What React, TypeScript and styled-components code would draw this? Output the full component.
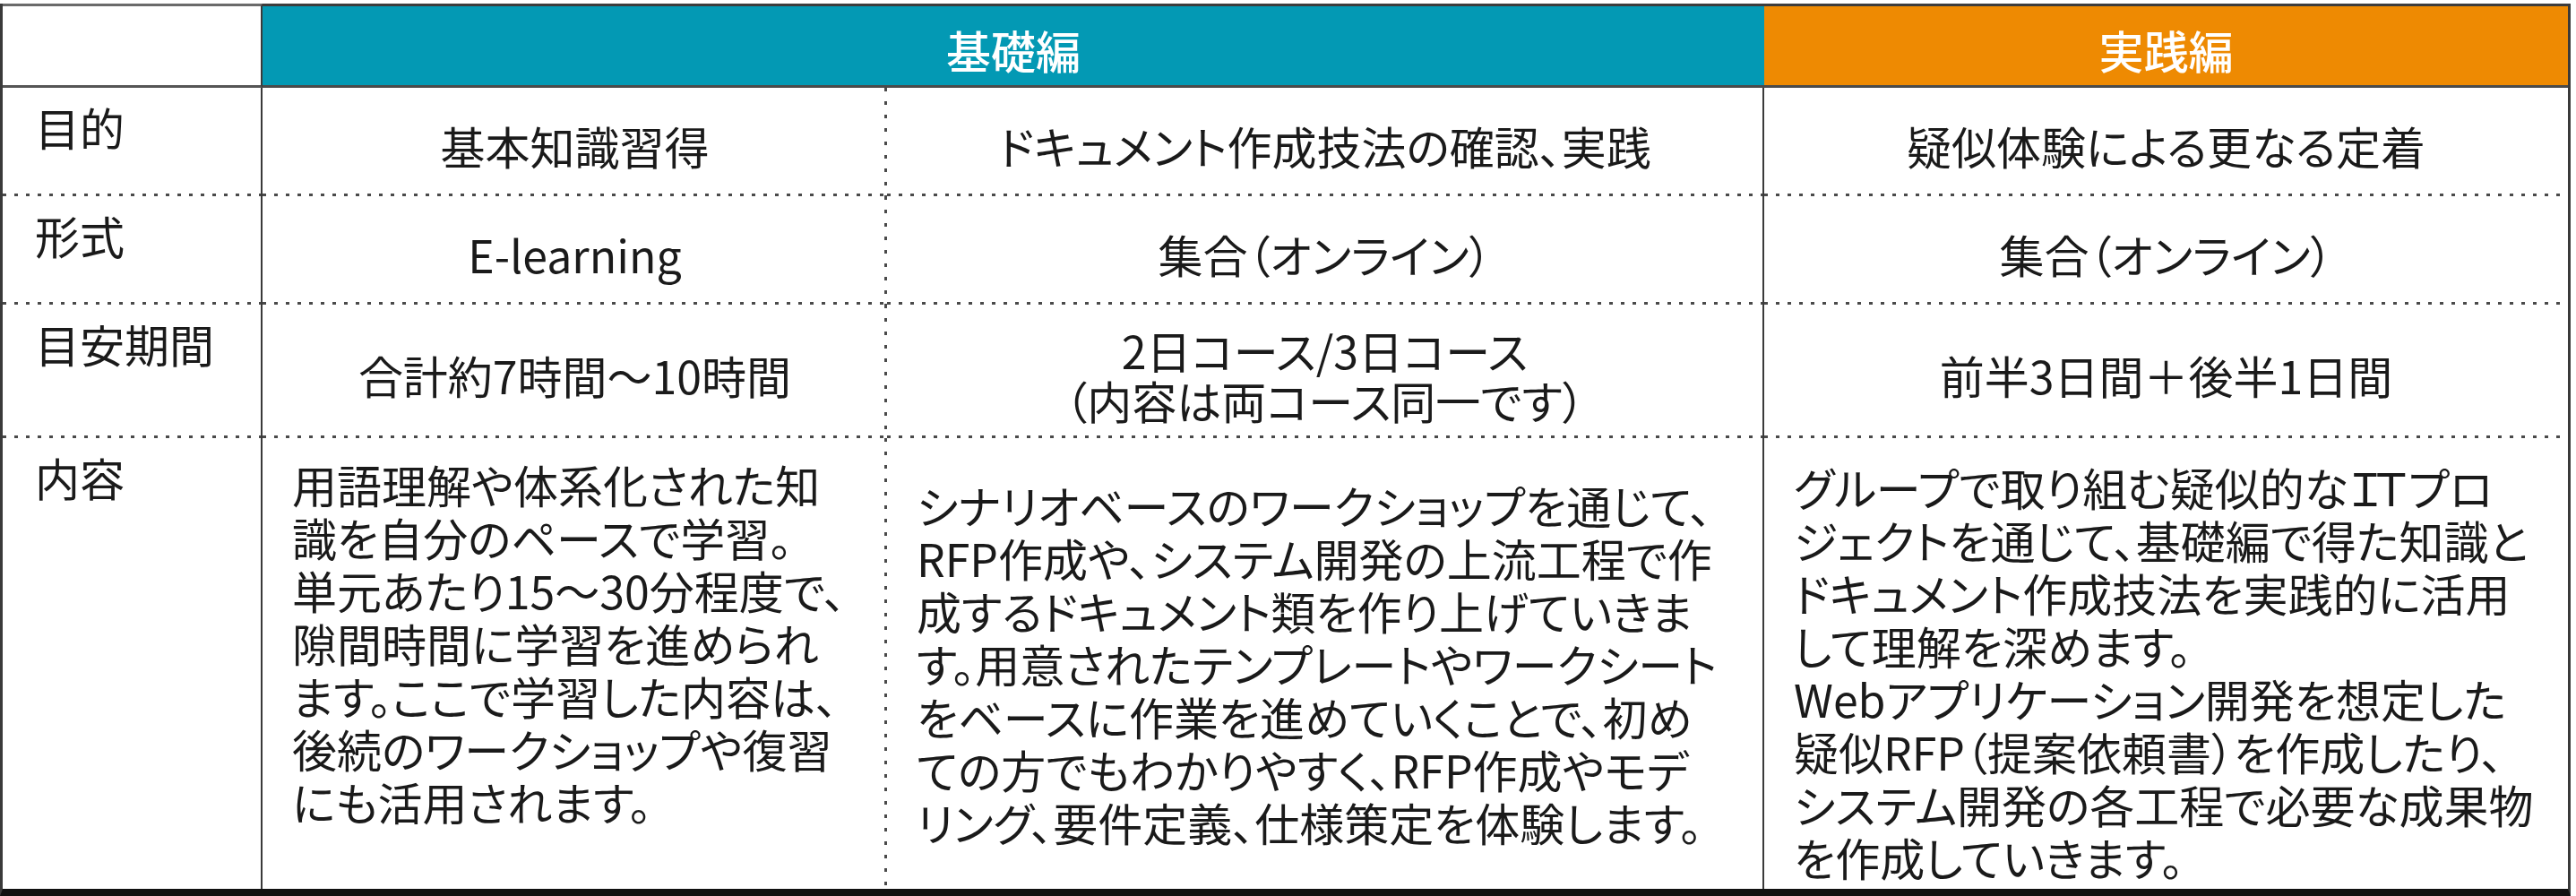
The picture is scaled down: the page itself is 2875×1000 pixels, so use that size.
import { Fragment } from "react";
import styled, { createGlobalStyle, css } from "styled-components";

const GlobalStyle = createGlobalStyle`
  body {
    margin: 0;
    background: #fff;
  }
`;

const dotsX = "linear-gradient(to right, #4a4a4a 0 4px, transparent 4px 13px)";
const dotsY = "linear-gradient(to bottom, #4a4a4a 0 4px, transparent 4px 15px)";

type Edge = "solid" | "dots" | "none";

interface CellProps {
  $right?: Edge;
  $last?: boolean;
}

// row separators are dotted, drawn as background layers so the spacing matches
const rules = (p: CellProps) => {
  const img: string[] = [];
  const pos: string[] = [];
  const size: string[] = [];
  const rep: string[] = [];
  if (!p.$last) {
    img.push(dotsX);
    pos.push("left bottom");
    size.push("13px 3px");
    rep.push("repeat-x");
  }
  if (p.$right === "dots") {
    img.push(dotsY);
    pos.push("right top");
    size.push("3px 15px");
    rep.push("repeat-y");
  }
  if (!img.length) return "";
  return `
    background-image: ${img.join(", ")};
    background-position: ${pos.join(", ")};
    background-size: ${size.join(", ")};
    background-repeat: ${rep.join(", ")};
  `;
};

const cell = css<CellProps>`
  box-sizing: border-box;
  min-width: 0;
  border-right: ${(p) => (p.$right === "solid" ? "2px solid #3a3a3a" : "none")};
  ${(p) => rules(p)}
`;

const Table = styled.div`
  display: grid;
  grid-template-columns: 290px 697px 979px 897px;
  grid-template-rows: 94px 121px 121px 149px 503px;
  width: max-content;
  margin-top: 4px;
  border-left: 3px solid #3a3a3a;
  border-right: 3px solid #3a3a3a;
  border-bottom: 8px solid #111;
  font-family: "Noto Sans CJK JP", "Noto Sans", sans-serif;
  font-feature-settings: "palt";
  font-size: 50px;
  line-height: 59px;
  color: #1a1a1a;
`;

const Corner = styled.div`
  box-sizing: border-box;
  border-top: 3px solid #6a6a6a;
  border-bottom: 3px solid #555;
  border-right: 2px solid #3a3a3a;
`;

const HeadCell = styled.div<{ $bg: string; $span?: number }>`
  grid-column: span ${(p) => p.$span ?? 1};
  box-sizing: border-box;
  display: flex;
  align-items: center;
  justify-content: center;
  padding-top: 8px;
  background: ${(p) => p.$bg};
  border-top: 3px solid #3c3c3c;
  border-bottom: 3px solid #4a4a4a;
  color: #fff;
  font-weight: 500;
`;

const Label = styled.div<CellProps>`
  ${cell};
  padding: 14px 0 0 36px;
  white-space: nowrap;
`;

const Value = styled.div<CellProps>`
  ${cell};
  display: flex;
  flex-direction: column;
  align-items: center;
  justify-content: center;
  padding-top: 6px;
  text-align: center;
  white-space: nowrap;
  line-height: 56px;
`;

const Content = styled.div<CellProps & { $center?: boolean; $top: number }>`
  ${cell};
  display: flex;
  flex-direction: column;
  justify-content: ${(p) => (p.$center ? "center" : "flex-start")};
  padding: ${(p) => p.$top}px 0 0 33px;
`;

const Line = styled.span`
  display: block;
  white-space: nowrap;
`;

const Tight = styled.span`
  letter-spacing: -0.18em;
  margin-right: 0.18em;
`;

type Row = { label: string; cells: string[][] };

const rows: Row[] = [
  {
    label: "目的",
    cells: [["基本知識習得"], ["ドキュメント作成技法の確認、実践"], ["疑似体験による更なる定着"]],
  },
  {
    label: "形式",
    cells: [["E-learning"], ["集合（オンライン）"], ["集合（オンライン）"]],
  },
  {
    label: "目安期間",
    cells: [
      ["合計約7時間～10時間"],
      ["2日コース/3日コース", "（内容は両コース同一です）"],
      ["前半3日間＋後半1日間"],
    ],
  },
];

const basic = [
  "用語理解や体系化された知",
  "識を自分のペースで学習。",
  "単元あたり15～30分程度で、",
  "隙間時間に学習を進められ",
  "ます。ここで学習した内容は、",
  "後続のワークショップや復習",
  "にも活用されます。",
];

const workshop = [
  "シナリオベースのワークショップを通じて、",
  "RFP作成や、システム開発の上流工程で作",
  "成するドキュメント類を作り上げていきま",
  "す。用意されたテンプレートやワークシート",
  "をベースに作業を進めていくことで、初め",
  "ての方でもわかりやすく、RFP作成やモデ",
  "リング、要件定義、仕様策定を体験します。",
];

const practice = [
  "ジェクトを通じて、基礎編で得た知識と",
  "ドキュメント作成技法を実践的に活用",
  "して理解を深めます。",
  "Webアプリケーション開発を想定した",
  "疑似RFP（提案依頼書）を作成したり、",
  "システム開発の各工程で必要な成果物",
  "を作成していきます。",
];

const edges: Edge[] = ["dots", "solid", "none"];

const App = () => {
  return (
    <>
      <GlobalStyle />
      <Table>
        <Corner />
        <HeadCell $bg="#0399b4" $span={2}>
          基礎編
        </HeadCell>
        <HeadCell $bg="#ee8a02">実践編</HeadCell>

        {rows.map((row) => (
          <Fragment key={row.label}>
            <Label $right="solid">{row.label}</Label>
            {row.cells.map((lines, i) => (
              <Value key={i} $right={edges[i]}>
                {lines.map((t) => (
                  <Line key={t}>{t}</Line>
                ))}
              </Value>
            ))}
          </Fragment>
        ))}

        <Label $right="solid" $last>
          内容
        </Label>
        <Content $right="dots" $last $top={22}>
          {basic.map((t) => (
            <Line key={t}>{t}</Line>
          ))}
        </Content>
        <Content $right="solid" $last $center $top={0}>
          {workshop.map((t) => (
            <Line key={t}>{t}</Line>
          ))}
        </Content>
        <Content $last $top={25}>
          <Line>
            グループで取り組む疑似的な<Tight>ＩＴ</Tight>プロ
          </Line>
          {practice.map((t) => (
            <Line key={t}>{t}</Line>
          ))}
        </Content>
      </Table>
    </>
  );
};

export default App;
